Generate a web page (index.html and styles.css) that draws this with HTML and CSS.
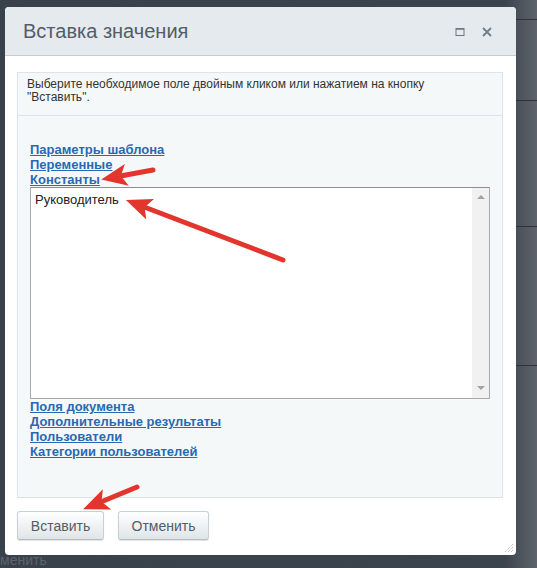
FILE: index.html
```html
<!DOCTYPE html>
<html lang="ru">
<head>
    <meta charset="UTF-8">
    <title>Вставка значения</title>
    <link rel="stylesheet" href="styles.css">
</head>
<body>
    <div class="backdrop">
        <span class="behind-text">менить</span>
        <div class="behind-line l1"></div>
        <div class="behind-line l2"></div>
        <div class="behind-line l3"></div>
        <div class="behind-line l4"></div>
    </div>

    <div class="dialog">
        <div class="dialog-head">
            <span class="dialog-title">Вставка значения</span>
            <span class="head-icons">
                <svg width="10" height="10" viewBox="0 0 10 10"><rect x="1" y="1.5" width="8" height="7" fill="none" stroke="#6e777f" stroke-width="1"/><line x1="1" y1="2" x2="9" y2="2" stroke="#6e777f" stroke-width="1.5"/></svg>
                <svg width="10" height="10" viewBox="0 0 10 10"><path d="M1 1 L9 9 M9 1 L1 9" stroke="#737c84" stroke-width="1.8"/></svg>
            </span>
        </div>

        <div class="dialog-body">
            <div class="panel">
                <div class="panel-note">Выберите необходимое поле двойным кликом или нажатием на кнопку<br>"Вставить".</div>
                <div class="panel-main">
                    <a href="#" class="group">Параметры шаблона</a>
                    <a href="#" class="group">Переменные</a>
                    <a href="#" class="group">Константы</a>
                    <div class="listbox">
                        <div class="list-items">
                            <div class="list-item">Руководитель</div>
                        </div>
                        <div class="list-scroll">
                            <span class="tri up"></span>
                            <span class="tri down"></span>
                        </div>
                    </div>
                    <a href="#" class="group">Поля документа</a>
                    <a href="#" class="group">Дополнительные результаты</a>
                    <a href="#" class="group">Пользователи</a>
                    <a href="#" class="group">Категории пользователей</a>
                </div>
            </div>
        </div>

        <div class="dialog-foot">
            <button type="button" class="btn btn-insert">Вставить</button>
            <button type="button" class="btn btn-cancel">Отменить</button>
        </div>

        <svg class="resize" width="10" height="10" viewBox="0 0 10 10">
            <path d="M9 1 L1 9 M9 4 L4 9 M9 7 L7 9" stroke="#aab0b5" stroke-width="1" stroke-dasharray="1 1"/>
        </svg>
    </div>

    <!-- red pointer arrows drawn over the screenshot -->
    <svg class="arrows" width="537" height="568" viewBox="0 0 537 568">
        <defs>
            <marker id="head" markerUnits="userSpaceOnUse" markerWidth="28" markerHeight="24" refX="12" refY="12" orient="auto">
                <path d="M0 1 L26 12 L0 23 L6 12 Z" fill="#e2352d"/>
            </marker>
        </defs>
        <g stroke="#e2352d" stroke-width="5" stroke-linecap="round" fill="none" marker-end="url(#head)">
            <line x1="153" y1="170" x2="115" y2="177"/>
            <line x1="283" y1="260" x2="139" y2="205"/>
            <line x1="137" y1="487" x2="96" y2="504"/>
        </g>
    </svg>
</body>
</html>
```

FILE: styles.css
```css
body {
    margin: 0;
    width: 537px;
    height: 568px;
    overflow: hidden;
    position: relative;
    font-family: "Liberation Sans", Arial, sans-serif;
    background: linear-gradient(to right, #39414b 0%, #3b434d 94%, #5f646b 100%);
    padding: 7px 0 0 5px;
    box-sizing: border-box;
}

.backdrop {
    position: absolute;
    inset: 0;
}

.behind-text {
    position: absolute;
    left: 0;
    top: 552px;
    font-size: 14px;
    line-height: 16px;
    color: #5b636c;
}

.behind-line {
    position: absolute;
    left: 516px;
    right: 0;
    height: 1px;
    background: #2c333b;
}

.l1 { top: 19px; }
.l2 { top: 100px; }
.l3 { top: 226px; }
.l4 { top: 365px; }

.dialog {
    position: relative;
    width: 511px;
    height: 548px;
    background: #fff;
    border-radius: 4px;
    display: flex;
    flex-direction: column;
}

.dialog-head {
    height: 49px;
    background: #e4eaee;
    border-bottom: 1px solid #c6ccd1;
    border-radius: 4px 4px 0 0;
    display: flex;
    align-items: center;
    justify-content: space-between;
    padding: 0 24px 0 18px;
    box-sizing: border-box;
}

.dialog-title {
    font-size: 20px;
    color: #535c69;
    margin-top: 1px;
}

.head-icons {
    display: flex;
    gap: 17px;
    margin-top: 2px;
}

.dialog-body {
    padding: 16px 13px 0 12px;
}

.panel {
    border: 1px solid #dde4e7;
    background: #f5f8f9;
    height: 426px;
    box-sizing: border-box;
}

.panel-note {
    height: 43px;
    border-bottom: 1px solid #dde4e7;
    padding: 5px 9px 0;
    box-sizing: border-box;
    font-size: 12px;
    line-height: 13px;
    color: #333;
}

.panel-main {
    padding: 26px 12px 0;
    display: flex;
    flex-direction: column;
    align-items: flex-start;
}

.group {
    font-size: 13px;
    line-height: 15px;
    font-weight: bold;
    color: #2a68b1;
    text-decoration: underline;
}

.listbox {
    width: 460px;
    height: 212px;
    box-sizing: border-box;
    border: 1px solid #a9a9a9;
    border-top-color: #8f8f8f;
    background: #fff;
    display: flex;
}

.list-items {
    flex: 1;
    padding: 4px 4px;
}

.list-item {
    font-size: 13px;
    line-height: 15px;
    color: #222;
}

.list-scroll {
    width: 17px;
    background: #f1f1f1;
    display: flex;
    flex-direction: column;
    justify-content: space-between;
    align-items: center;
    padding: 7px 0 8px;
}

.tri {
    width: 0;
    height: 0;
    border-left: 4px solid transparent;
    border-right: 4px solid transparent;
}

.tri.up {
    border-bottom: 4px solid #a3a3a3;
}

.tri.down {
    border-top: 4px solid #a3a3a3;
}

.dialog-foot {
    padding: 13px 12px 0;
    display: flex;
    gap: 14px;
}

.btn {
    height: 29px;
    padding: 0;
    font-family: "Liberation Sans", Arial, sans-serif;
    font-size: 14px;
    color: #535c69;
    background: linear-gradient(to bottom, #ffffff, #dfe5e8);
    border: 1px solid #c9d0d4;
    border-bottom-color: #b5bcc1;
    border-radius: 3px;
    box-shadow: 0 1px 1px rgba(0, 0, 0, 0.12);
    cursor: pointer;
}

.btn-insert {
    width: 87px;
}

.btn-cancel {
    width: 91px;
}

.resize {
    position: absolute;
    right: 2px;
    bottom: 2px;
}

.arrows {
    position: absolute;
    left: 0;
    top: 0;
    pointer-events: none;
}
```
